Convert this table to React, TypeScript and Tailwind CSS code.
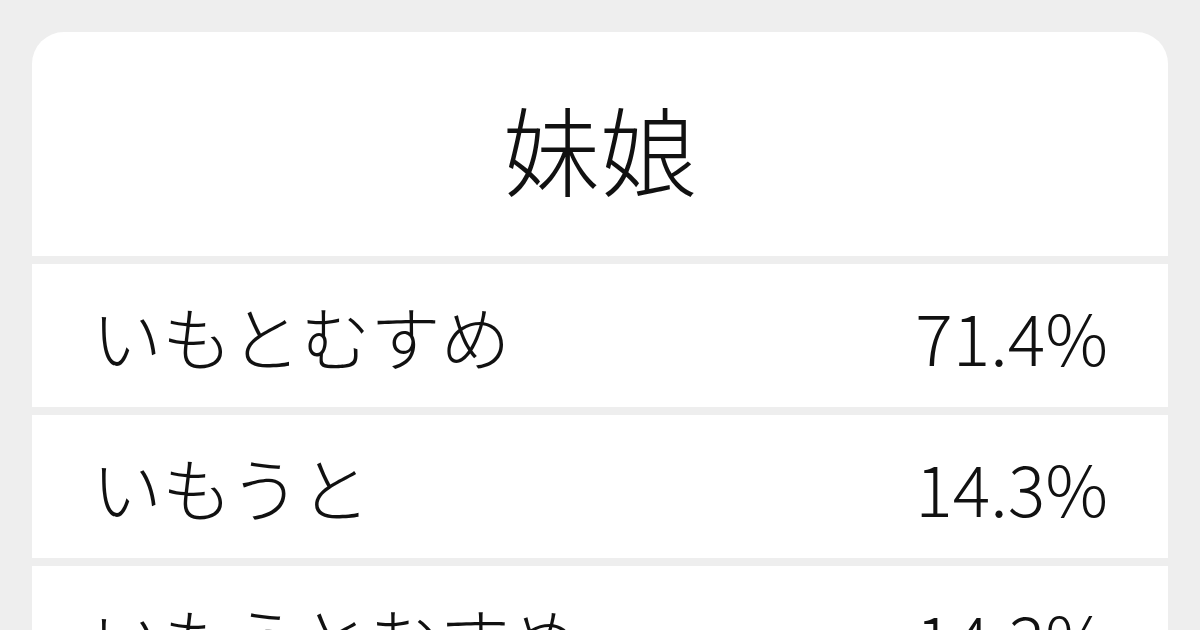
const rows = [
  { reading: "いもとむすめ", ratio: "71.4%" },
  { reading: "いもうと", ratio: "14.3%" },
  { reading: "いもうとむすめ", ratio: "14.3%" },
];

export default function App() {
  return (
    <div
      className="h-[630px] w-[1200px] overflow-hidden bg-[#eeeeee] px-8 pt-8 text-[#111111]"
      style={{ fontFamily: '"Noto Sans CJK JP", "Noto Sans", sans-serif' }}
    >
      <div className="flex flex-col gap-2 overflow-hidden rounded-t-[32px]">
        <div className="flex h-[224px] items-center justify-center bg-white pt-[4px]">
          <h1 className="text-[97px] font-light leading-none">妹娘</h1>
        </div>
        {rows.map((row) => (
          <div
            key={row.reading}
            className="flex h-[143px] shrink-0 items-center justify-between bg-white pl-[60px] pr-[60px]"
          >
            <span className="text-[70px] font-light leading-none">{row.reading}</span>
            <span className="text-[70px] font-light leading-none">{row.ratio}</span>
          </div>
        ))}
      </div>
    </div>
  );
}
